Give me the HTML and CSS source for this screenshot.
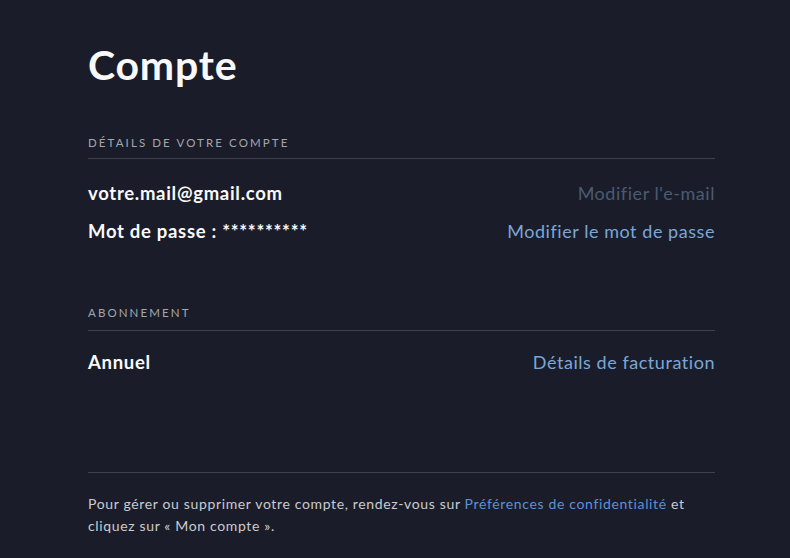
FILE: index.html
```html
<!DOCTYPE html>
<html lang="fr">
<head>
  <meta charset="UTF-8">
  <meta name="viewport" content="width=device-width, initial-scale=1.0">
  <title>Compte</title>
  <link rel="stylesheet" href="styles.css">
</head>
<body>

  <div class="account">
    <h1 class="title">Compte</h1>

    <div class="section">
      <p class="section-label">Détails de votre compte</p>
      <div class="row">
        <span class="row-value">votre.mail@gmail.com</span>
        <a class="row-link disabled">Modifier l'e-mail</a>
      </div>
      <div class="row">
        <span class="row-value">Mot de passe : **********</span>
        <a class="row-link">Modifier le mot de passe</a>
      </div>
    </div>

    <div class="section subscription">
      <p class="section-label">Abonnement</p>
      <div class="row">
        <span class="row-value">Annuel</span>
        <a class="row-link">Détails de facturation</a>
      </div>
    </div>

    <div class="footer">
      <p class="footer-text">Pour gérer ou supprimer votre compte, rendez-vous sur <a class="footer-link">Préférences de confidentialité</a> et cliquez sur « Mon compte ».</p>
    </div>
  </div>

</body>
</html>
```

FILE: styles.css
```css
body{
  margin: 0;
  background-color: #1a1d29;
  font-family: Lato, "Open Sans", sans-serif;
  color: #f9f9f9;
}

.account{
  width: 627px;
  padding: 38px 0 0 88px;
}

h1.title{
  margin: 0 0 44px 0;
  font-size: 41px;
  font-weight: 700;
  line-height: 54px;
  letter-spacing: 0.8px;
  color: #f9f9f9;
}

p.section-label{
  margin: 0;
  padding-bottom: 8px;
  border-bottom: 1px solid #3f424c;
  font-size: 11.5px;
  line-height: 14px;
  letter-spacing: 2.1px;
  text-transform: uppercase;
  color: #a4a6ae;
}

.section{
  display: flex;
  flex-direction: column;
}

.row{
  display: flex;
  justify-content: space-between;
  align-items: center;
  height: 38px;
}

.section .row:first-of-type{
  margin-top: 15px;
}

.row-value{
  font-size: 18.5px;
  font-weight: 700;
  letter-spacing: 0.7px;
  color: #f9f9f9;
}

a.row-link{
  font-size: 18px;
  letter-spacing: 0.55px;
  color: #7aa6d8;
  cursor: pointer;
}

a.row-link.disabled{
  color: #4b5b71;
}

.subscription{
  margin-top: 56px;
}

.subscription p.section-label{
  padding-bottom: 10px;
}

.subscription .row:first-of-type{
  margin-top: 12px;
}

.footer{
  margin-top: 91px;
  border-top: 1px solid #3f424c;
}

p.footer-text{
  margin: 20px 0 0 0;
  font-size: 14px;
  line-height: 22px;
  letter-spacing: 0.65px;
  color: #cacbd0;
}

a.footer-link{
  color: #5a92d6;
}
```
